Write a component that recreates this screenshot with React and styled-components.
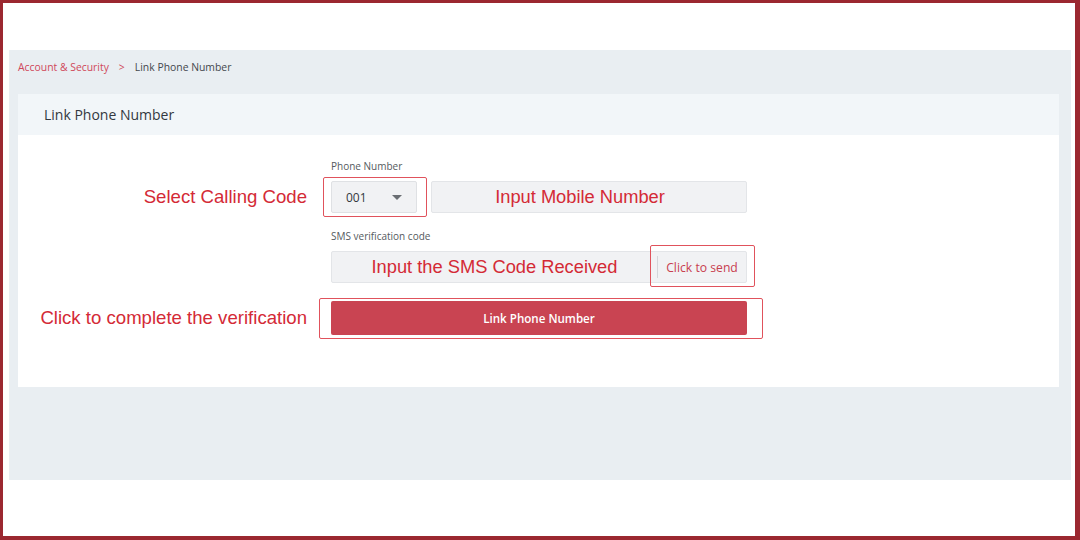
import React from 'react'
import styled, { createGlobalStyle } from 'styled-components'

const GlobalStyle = createGlobalStyle`
  html, body {
    margin: 0;
    padding: 0;
    background: #ffffff;
  }

  * {
    box-sizing: border-box;
  }
`

const Frame = styled.div`
  width: 1080px;
  height: 540px;
  border: 3px solid #9b2830;
  border-right-width: 5px;
  border-bottom-width: 4px;
  padding: 47px 4px 0 6px;
  background: #ffffff;
  font-family: 'Open Sans', 'Liberation Sans', sans-serif;
`

const Panel = styled.main`
  height: 430px;
  background: #e9eef2;
  padding: 0 12px 0 9px;
`

const Breadcrumb = styled.nav`
  height: 34px;
  margin-bottom: 10px;
  display: flex;
  align-items: center;
  gap: 9px;
  font-size: 10.4px;
`

const Crumb = styled.span`
  color: ${props => (props.active ? '#d0485a' : '#44484e')};
`

const Chevron = styled.span`
  color: #d0485a;
  font-size: 10.4px;
  padding: 0 1px;
`

const Card = styled.section`
  height: 293px;
  background: #ffffff;
  display: flex;
  flex-direction: column;
`

const CardHeader = styled.header`
  height: 41px;
  background: #f2f6f9;
  display: flex;
  align-items: center;
  padding-left: 26px;
  font-size: 14px;
  color: #333840;
`

const Form = styled.div`
  display: grid;
  grid-template-columns: 289px 416px;
  column-gap: 24px;
  padding-top: 24px;
`

const FieldLabel = styled.label`
  grid-column: 2;
  font-size: 10px;
  line-height: 14px;
  color: #555a60;
  margin-bottom: 8px;
  margin-top: ${props => (props.spaced ? '16px' : '0')};
`

const Note = styled.div`
  grid-column: 1;
  justify-self: end;
  align-self: center;
  margin-top: ${props => (props.spaced ? '18px' : '0')};
  font-family: 'Liberation Sans', Arial, sans-serif;
  font-size: 18.6px;
  color: #d42a36;
`

const Row = styled.div`
  grid-column: 2;
  display: flex;
  gap: 14px;
  height: 32px;
`

const Outlined = styled.div`
  position: relative;
  display: flex;
  flex: ${props => (props.grow ? 1 : 'none')};

  &::after {
    content: '';
    position: absolute;
    top: ${props => props.t}px;
    left: ${props => props.l}px;
    right: ${props => props.r}px;
    bottom: ${props => props.b}px;
    border: 1px solid #e0525c;
    border-radius: 2px;
    pointer-events: none;
  }
`

const Select = styled.div`
  width: 86px;
  height: 32px;
  background: #f1f2f4;
  border: 1px solid #dfe1e4;
  border-radius: 2px;
  display: flex;
  align-items: center;
  justify-content: space-between;
  padding: 0 14px;
  font-size: 12px;
  color: #333840;
`

const Caret = styled.span`
  width: 0;
  height: 0;
  border-left: 5px solid transparent;
  border-right: 5px solid transparent;
  border-top: 5px solid #6a6e73;
`

const Input = styled.div`
  flex: 1;
  height: 32px;
  background: #f1f2f4;
  border: 1px solid #e3e5e8;
  border-radius: 2px;
  display: flex;
  align-items: center;
  font-family: 'Liberation Sans', Arial, sans-serif;
  font-size: 18.3px;
  color: #d42a36;
`

const InputText = styled.span`
  flex: 1;
  text-align: center;
  padding-right: ${props => props.shift || 0}px;
`

const SendButton = styled.div`
  width: 89px;
  height: 22px;
  display: flex;
  align-items: center;
  justify-content: center;
  border-left: 1px solid #d4d6da;
  font-family: 'Open Sans', 'Liberation Sans', sans-serif;
  font-size: 12.2px;
  color: #c8404f;
`

const SubmitRow = styled.div`
  grid-column: 2;
  margin-top: 18px;
  height: 34px;
  display: flex;
`

const Submit = styled.button`
  flex: 1;
  height: 34px;
  border: none;
  border-radius: 2px;
  background: #c94452;
  color: #ffffff;
  font-family: 'Open Sans', 'Liberation Sans', sans-serif;
  font-size: 11.6px;
  font-weight: 600;
  cursor: pointer;
`

const App = () => (
  <>
    <GlobalStyle />
    <Frame>
      <Panel>
        <Breadcrumb>
          <Crumb active>Account &amp; Security</Crumb>
          <Chevron>&gt;</Chevron>
          <Crumb>Link Phone Number</Crumb>
        </Breadcrumb>
        <Card>
          <CardHeader>Link Phone Number</CardHeader>
          <Form>
            <FieldLabel>Phone Number</FieldLabel>
            <Note>Select Calling Code</Note>
            <Row>
              <Outlined t={-4} l={-8} r={-10} b={-4}>
                <Select>
                  001
                  <Caret />
                </Select>
              </Outlined>
              <Input>
                <InputText shift={18}>Input Mobile Number</InputText>
              </Input>
            </Row>
            <FieldLabel spaced>SMS verification code</FieldLabel>
            <Row>
              <Input>
                <InputText>Input the SMS Code Received</InputText>
                <Outlined t={-11} l={-7} r={-9} b={-9}>
                  <SendButton>Click to send</SendButton>
                </Outlined>
              </Input>
            </Row>
            <Note spaced>Click to complete the verification</Note>
            <SubmitRow>
              <Outlined grow t={-3} l={-12} r={-16} b={-4}>
                <Submit>Link Phone Number</Submit>
              </Outlined>
            </SubmitRow>
          </Form>
        </Card>
      </Panel>
    </Frame>
  </>
)

export default App
